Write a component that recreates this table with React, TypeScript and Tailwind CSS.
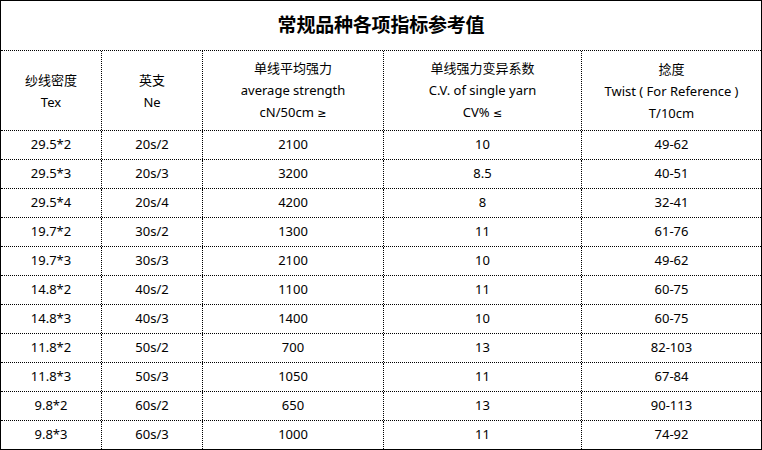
import type { ReactNode } from 'react';

const rows: [string, string, string, string, string][] = [
  ['29.5*2', '20s/2', '2100', '10', '49-62'],
  ['29.5*3', '20s/3', '3200', '8.5', '40-51'],
  ['29.5*4', '20s/4', '4200', '8', '32-41'],
  ['19.7*2', '30s/2', '1300', '11', '61-76'],
  ['19.7*3', '30s/3', '2100', '10', '49-62'],
  ['14.8*2', '40s/2', '1100', '11', '60-75'],
  ['14.8*3', '40s/3', '1400', '10', '60-75'],
  ['11.8*2', '50s/2', '700', '13', '82-103'],
  ['11.8*3', '50s/3', '1050', '11', '67-84'],
  ['9.8*2', '60s/2', '650', '13', '90-113'],
  ['9.8*3', '60s/3', '1000', '11', '74-92'],
];

// math signs need a latin font, otherwise the CJK fallback draws slanted ones
const sign = (s: string) => (
  <span style={{ fontFamily: '"DejaVu Sans", sans-serif' }} className="text-[11px]">
    {s}
  </span>
);

const headers: ReactNode[][] = [
  ['纱线密度', 'Tex'],
  ['英支', 'Ne'],
  ['单线平均强力', 'average strength', <>cN/50cm {sign('≥')}</>],
  ['单线强力变异系数', 'C.V. of single yarn', <>CV% {sign('≤')}</>],
  ['捻度', 'Twist ( For Reference )', 'T/10cm'],
];

const cols = 'grid grid-cols-[101px_101px_181px_198px_1fr]';

export default function App() {
  return (
    <div
      className="w-[762px] h-[450px] box-border border border-black bg-white text-black text-[13px]"
      style={{ fontFamily: '"Noto Sans", "Noto Sans CJK SC", sans-serif' }}
    >
      {/* Title */}
      <div className="h-[50px] box-border border-b border-dotted border-black flex items-center justify-center">
        <h1 className="text-[19px] font-bold tracking-[-0.2px]">常规品种各项指标参考值</h1>
      </div>

      {/* Header */}
      <div className={`${cols} h-[80px] box-border border-b border-dotted border-black`}>
        {headers.map((lines, i) => (
          <div
            key={i}
            className={`flex flex-col items-center justify-center leading-[22px] box-border ${
              i < 4 ? 'border-r border-dotted border-black' : ''
            }`}
          >
            {lines.map((l, li) => (
              <span key={li}>{l}</span>
            ))}
          </div>
        ))}
      </div>

      {/* Data rows */}
      {rows.map((r, ri) => (
        <div
          key={ri}
          className={`${cols} box-border ${
            ri < rows.length - 1 ? 'h-[29px] border-b border-dotted border-black' : 'h-[28px]'
          }`}
        >
          {r.map((c, ci) => (
            <div
              key={ci}
              className={`flex items-center justify-center box-border ${
                ci < 4 ? 'border-r border-dotted border-black' : ''
              }`}
            >
              {c}
            </div>
          ))}
        </div>
      ))}
    </div>
  );
}
